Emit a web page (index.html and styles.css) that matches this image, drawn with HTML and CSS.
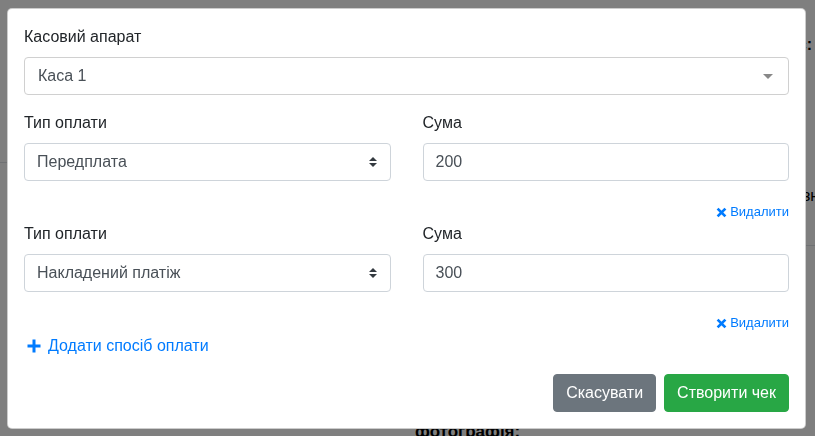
FILE: index.html
```html
<!DOCTYPE html>
<html lang="uk">
<head>
<meta charset="utf-8">
<title>Створити чек</title>
<link rel="stylesheet" href="styles.css">
</head>
<body>
<div class="page">
  <div class="pg-top"><span class="frag-a">Ю</span><span class="frag-b">Ю Ю</span></div>
  <div class="pg-status">Статус:</div>
  <div class="pg-line-left"></div>
  <div class="pg-name">знижка</div>
  <div class="pg-line-right"></div>
  <div class="pg-bottom">фотографія:</div>
</div>

<div class="backdrop"></div>

<div class="modal-wrap">
  <div class="modal">
    <div class="field">
      <label class="label">Касовий апарат</label>
      <div class="combo">
        <span class="combo-text">Каса 1</span>
        <span class="combo-caret"></span>
      </div>
    </div>

    <div class="pay-row">
      <div class="field">
        <label class="label">Тип оплати</label>
        <div class="select">
          <span>Передплата</span>
          <svg class="updown" viewBox="0 0 4 5" width="8" height="10"><path d="M2 0L0 2h4zm0 5L0 3h4z" fill="#343a40"/></svg>
        </div>
      </div>
      <div class="field">
        <label class="label">Сума</label>
        <div class="input">200</div>
      </div>
    </div>
    <div class="remove remove-1"><a class="remove-link"><svg class="x" viewBox="0 0 11 11" width="11" height="11"><path d="M1.6 1.6L9.4 9.4M9.4 1.6L1.6 9.4" stroke="#007bff" stroke-width="2.7"/></svg>Видалити</a></div>

    <div class="pay-row">
      <div class="field">
        <label class="label">Тип оплати</label>
        <div class="select">
          <span>Накладений платіж</span>
          <svg class="updown" viewBox="0 0 4 5" width="8" height="10"><path d="M2 0L0 2h4zm0 5L0 3h4z" fill="#343a40"/></svg>
        </div>
      </div>
      <div class="field">
        <label class="label">Сума</label>
        <div class="input">300</div>
      </div>
    </div>
    <div class="remove remove-2"><a class="remove-link"><svg class="x" viewBox="0 0 11 11" width="11" height="11"><path d="M1.6 1.6L9.4 9.4M9.4 1.6L1.6 9.4" stroke="#007bff" stroke-width="2.7"/></svg>Видалити</a></div>

    <a class="add"><svg class="plus" viewBox="0 0 14 14" width="14" height="14"><path d="M7 0.5V13.5M0.5 7H13.5" stroke="#007bff" stroke-width="3"/></svg>Додати спосіб оплати</a>

    <div class="actions">
      <button class="btn btn-secondary">Скасувати</button>
      <button class="btn btn-success">Створити чек</button>
    </div>
  </div>
</div>
</body>
</html>
```
FILE: styles.css
```css
* { box-sizing: border-box; }
html, body { margin: 0; padding: 0; }
body {
  width: 815px;
  height: 436px;
  overflow: hidden;
  background: #fff;
  font-family: "Liberation Sans", Arial, sans-serif;
  font-size: 16px;
  line-height: 24px;
  color: #212529;
}
.page {
  height: 436px;
  overflow: hidden;
  font-weight: bold;
  color: #000;
}
.pg-top {
  height: 9px;
  overflow: hidden;
  white-space: nowrap;
}
.frag-a, .frag-b {
  display: inline-block;
  margin-top: -18px;
  vertical-align: top;
}
.frag-a { margin-left: 414px; }
.frag-b { margin-left: 204px; word-spacing: 30px; }
.pg-status {
  margin-top: 28px;
  height: 16px;
  line-height: 16px;
  text-align: right;
  padding-right: 3px;
}
.pg-line-left {
  margin-top: 109px;
  width: 400px;
  height: 1px;
  background: #dee2e6;
}
.pg-name {
  margin-top: 25px;
  height: 16px;
  line-height: 16px;
  padding-left: 803px;
  white-space: nowrap;
  font-weight: normal;
  font-size: 16px;
}
.pg-line-right {
  margin-top: 41px;
  margin-left: 420px;
  height: 1px;
  background: #dee2e6;
}
.pg-bottom {
  margin-top: 176px;
  padding-left: 415px;
  font-size: 17px;
  line-height: 20px;
}
.backdrop {
  position: fixed;
  inset: 0;
  background: rgba(0, 0, 0, 0.5);
}
.modal-wrap {
  position: fixed;
  inset: 0;
  padding: 8px 9px 0 7px;
}
.modal {
  background: #fff;
  border: 1px solid rgba(0, 0, 0, 0.2);
  border-radius: 5px;
  padding: 16px;
  display: flex;
  flex-direction: column;
}
.field { margin-bottom: 16px; }
.label {
  display: block;
  margin-bottom: 8px;
}
.combo, .select, .input {
  height: 38px;
  border: 1px solid #ced4da;
  border-radius: 4px;
  display: flex;
  align-items: center;
  padding: 0 12px;
  color: #495057;
}
.combo { padding-left: 13px; justify-content: space-between; border-color: #d0d0d0; }
.combo-caret {
  width: 0;
  height: 0;
  border-style: solid;
  border-width: 5px 5px 0 5px;
  border-color: #888 transparent transparent transparent;
  margin-right: 3px;
}
.select { justify-content: space-between; }
.updown { display: block; margin-right: 1px; }
.pay-row {
  display: grid;
  grid-template-columns: 1fr 1fr;
  column-gap: 32px;
}
.remove {
  height: 26px;
  padding-top: 4px;
  line-height: 20px;
  text-align: right;
  font-size: 13px;
}
.remove-1 { height: 25px; padding-top: 5px; }
.remove-2 { height: 26px; padding-top: 5px; }
.remove-link {
  color: #007bff;
  display: inline-flex;
  align-items: center;
}
.x { margin-right: 3px; }
.add {
  color: #007bff;
  display: flex;
  align-items: center;
  line-height: 24px;
  padding-left: 3px;
}
.plus { margin-right: 7px; }
.actions {
  margin-top: 16px;
  display: flex;
  justify-content: flex-end;
  gap: 8px;
}
.btn {
  font-family: inherit;
  font-size: 16px;
  line-height: 24px;
  padding: 6px 12px;
  border: 1px solid transparent;
  border-radius: 4px;
  color: #fff;
  height: 38px;
}
.btn-secondary { background: #6c757d; border-color: #6c757d; }
.btn-success { background: #28a745; border-color: #28a745; }
```
